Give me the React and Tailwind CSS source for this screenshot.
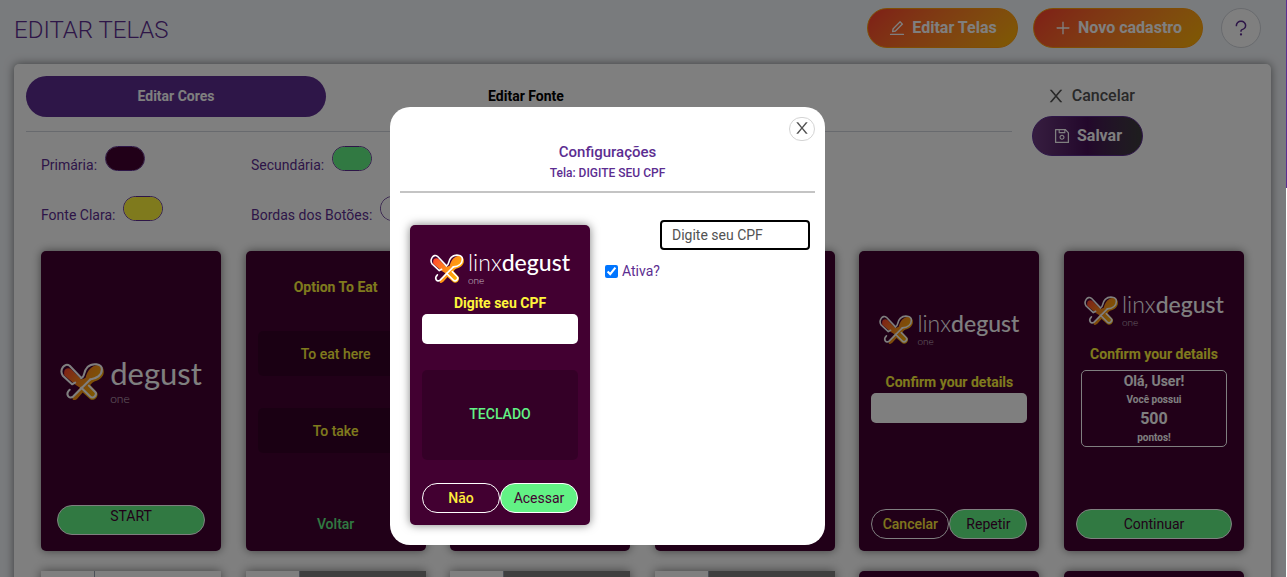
import { useId } from 'react';
import {
    AiOutlineEdit,
    AiOutlinePlus,
    AiOutlineQuestion,
    AiOutlineSave,
} from 'react-icons/ai';

const colors = [
    { id: 'primary', label: 'Primária:', value: '#420031' },
    { id: 'secondary', label: 'Secundária:', value: '#62f285' },
    { id: 'light-font', label: 'Fonte Clara:', value: '#fff53b' },
    { id: 'button-border', label: 'Bordas dos Botões:', value: '#ffffff' },
];

function CloseIcon({ className }) {
    return (
        <svg viewBox="0 0 1024 1024" fill="currentColor" className={className} aria-hidden="true">
            <path d="M563.8 512l262.5-312.9c4.4-5.2.7-13.1-6.1-13.1h-79.8c-4.7 0-9.2 2.1-12.3 5.7L511.6 449.8 295.1 191.7c-3-3.6-7.5-5.7-12.3-5.7H203c-6.8 0-10.5 7.9-6.1 13.1L459.4 512 196.9 824.9A7.95 7.95 0 0 0 203 838h79.8c4.7 0 9.2-2.1 12.3-5.7l216.5-258.1 216.5 258.1c3 3.6 7.5 5.7 12.3 5.7h79.8c6.8 0 10.5-7.9 6.1-13.1L563.8 512z" />
        </svg>
    );
}

function LogoIcon({ className }) {
    const id = useId();
    return (
        <svg viewBox="0 0 128 108" className={className} fill="none" aria-hidden="true">
            <defs>
                <linearGradient id={id} x1="0" y1="0" x2="1" y2="0.6">
                    <stop offset="0" stopColor="#ff3b30" />
                    <stop offset="0.5" stopColor="#ff8a1a" />
                    <stop offset="1" stopColor="#ffb800" />
                </linearGradient>
            </defs>
            <path
                d="M12 30C10 16 24 12 32 18L62 48L74 44C80 22 92 6 112 6C130 8 130 30 124 38C116 52 100 52 94 58L88 64L108 86C114 100 98 112 88 106L66 86L50 104C42 112 32 108 38 96L58 72L46 64L12 36Z"
                fill={`url(#${id})`}
            />
            <g stroke="#fff" strokeWidth="6" strokeLinecap="round" strokeLinejoin="round">
                <path d="M44 57L35 62L8 37C-3 20 13-3 28 8L62 44" />
                <path d="M62 44C74 40 66 26 80 12C94-1 122 1 122 19C122 36 106 46 88 48" />
                <path d="M88 48L38 98C26 107 14 91 28 78" />
                <path d="M62 72L88 98C97 106 110 92 102 84L84 66" />
            </g>
        </svg>
    );
}

function Logo({ short }) {
    if (short) {
        return (
            <div className="flex items-center justify-center gap-1.5 text-white">
                <LogoIcon className="h-[37px] w-11" />
                <div className="text-left font-['Lato','Liberation_Sans',sans-serif]">
                    <p className="text-[31px] leading-9">degust</p>
                    <p className="text-xs leading-4 font-light opacity-70">one</p>
                </div>
            </div>
        );
    }
    return (
        <div className="flex items-center justify-center gap-1 text-white">
            <LogoIcon className="h-[29px] w-[34px]" />
            <div className="text-left font-['Lato','Liberation_Sans',sans-serif]">
                <p className="text-[23px] leading-6">
                    <span className="font-light">linx</span>
                    <span className="font-medium">degust</span>
                </p>
                <p className="text-[10px] leading-3 font-light opacity-70">one</p>
            </div>
        </div>
    );
}

function ScreenCard({ children }) {
    return (
        <div className="flex h-[300px] w-[180px] shrink-0 flex-col rounded-[5px] bg-[#420031] px-3 pb-3 text-center text-sm leading-5 shadow-[0_0_10px_rgba(0,0,0,0.5)]">
            {children}
        </div>
    );
}

function CardTitle({ children }) {
    return <h3 className="font-bold text-[#fff53b]">{children}</h3>;
}

function TwoButtons({ left, right }) {
    return (
        <div className="mt-auto flex">
            <button className="h-[30px] flex-1 rounded-full border border-white font-medium text-[#ffeb3b]">
                {left}
            </button>
            <button className="h-[30px] flex-1 rounded-full border border-white bg-[#62f285] text-[#420031]">
                {right}
            </button>
        </div>
    );
}

function PreviewTop({ dark }) {
    return (
        <div className={dark ? 'flex h-[300px] w-[180px] bg-[#7f7f7f] shadow-[0_0_10px_rgba(0,0,0,0.5)]' : 'flex h-[300px] w-[180px] bg-white shadow-[0_0_10px_rgba(0,0,0,0.5)]'}>
            <div className="w-[54px] border-r border-gray-400 bg-white" />
        </div>
    );
}

function ConfigModal() {
    return (
        <div className="absolute inset-0 flex items-start justify-center bg-black/50 pt-[107px] pr-[71px]">
            <div role="dialog" aria-labelledby="modal-title" className="w-[435px] rounded-[20px] bg-white px-2.5 pt-2.5 pb-5">
                {/* Close */}
                <div className="flex h-6 justify-end">
                    <button aria-label="Fechar" className="flex h-6 w-[26px] justify-center rounded-full border border-neutral-300 pt-px text-neutral-600">
                        <CloseIcon className="size-[18px]" />
                    </button>
                </div>

                {/* Title */}
                <div className="border-b-2 border-[#c4c4c4] pb-[7px] text-center font-medium text-[#5c2d91]">
                    <h2 id="modal-title" className="text-[15px] leading-[22px]">Configurações</h2>
                    <p className="text-xs leading-[21px]">Tela: DIGITE SEU CPF</p>
                </div>

                {/* Content */}
                <div className="flex gap-[15px] px-2.5 pt-8">
                    <ScreenCard>
                        <div className="pt-[25px] pb-[7px]">
                            <Logo />
                        </div>
                        <CardTitle>Digite seu CPF</CardTitle>
                        <input aria-label="CPF" className="mt-px h-[30px] w-full rounded-[5px] bg-white px-2" />
                        <div className="mt-[26px] flex h-[90px] items-center justify-center rounded-[5px] bg-black/20 pb-0.5 font-medium text-[#62f285]">
                            TECLADO
                        </div>
                        <TwoButtons left="Não" right="Acessar" />
                    </ScreenCard>
                    <form className="-mt-[5px] -mr-[5px] flex-1 text-sm text-[#5c2d91]">
                        <div className="flex justify-end">
                            <input
                                autoFocus
                                aria-label="Texto"
                                defaultValue="Digite seu CPF"
                                className="h-[30px] w-[150px] rounded-[4px] border-2 border-black px-2.5 text-neutral-600 outline-none"
                            />
                        </div>
                        <label className="mt-[11px] flex items-center gap-1">
                            <input type="checkbox" defaultChecked className="size-[13px]" />
                            Ativa?
                        </label>
                    </form>
                </div>
            </div>
        </div>
    );
}

function App() {
    return (
        <div className="flex h-screen overflow-hidden bg-[#f3f6fa] font-['Roboto','Liberation_Sans',sans-serif]">
            <div className="relative flex-1 overflow-hidden">
                {/* Header */}
                <header className="flex h-16 items-start justify-between pt-2 pr-[25px] pl-3.5">
                    <h1 className="text-2xl leading-[44px] font-light text-[#5c2d91]">EDITAR TELAS</h1>
                    <div className="flex gap-[15px]">
                        <button className="flex h-10 w-[151px] items-center justify-center gap-1.5 rounded-full border border-[#ff9d0a] bg-linear-135 from-[#ff3d2e] to-[#ffb400] font-bold text-white">
                            <AiOutlineEdit className="size-[18px]" />
                            Editar Telas
                        </button>
                        <button className="flex h-10 w-[170px] items-center justify-center gap-1.5 rounded-full border border-[#ff9d0a] bg-linear-135 from-[#ff3d2e] to-[#ffb400] font-bold text-white">
                            <AiOutlinePlus className="size-[18px]" />
                            Novo cadastro
                        </button>
                        <button aria-label="Ajuda" className="ml-[3px] flex size-10 items-center justify-center rounded-full border border-gray-300 bg-white text-[#5c2d91]">
                            <AiOutlineQuestion className="size-5" />
                        </button>
                    </div>
                </header>

                {/* Main Content */}
                <main className="mr-[15px] ml-3.5 rounded-[5px] bg-white pt-3 shadow-[0_0_10px_rgba(0,0,0,0.5)]">
                    <div className="flex px-3">
                        <div className="flex-1">
                            {/* Tabs */}
                            <div className="flex gap-[50px] border-b border-gray-300 pb-3.5 text-sm font-bold">
                                <button className="h-[41px] w-[300px] rounded-full bg-[#5c2d91] pb-px text-white">Editar Cores</button>
                                <button className="h-[41px] w-[300px] pb-px">Editar Fonte</button>
                            </div>

                            {/* Colors */}
                            <div className="grid w-[450px] grid-cols-2 px-[15px] pt-3.5">
                                {colors.map((color) => (
                                    <div key={color.id} className="flex h-[50px] items-start gap-2">
                                        <label htmlFor={color.id} className="pt-[9px] text-sm leading-5 text-[#5c2d91]">
                                            {color.label}
                                        </label>
                                        <input
                                            type="color"
                                            id={color.id}
                                            defaultValue={color.value}
                                            className="h-[25px] w-10 shrink-0 overflow-hidden rounded-full border border-[#5c2d91] [&::-webkit-color-swatch]:border-0 [&::-webkit-color-swatch-wrapper]:p-0"
                                        />
                                    </div>
                                ))}
                            </div>
                        </div>

                        {/* Actions */}
                        <div className="mr-[116px] ml-5 w-[111px]">
                            <button className="flex h-10 w-full items-center justify-end gap-1.5 pr-2 font-medium text-neutral-600">
                                <CloseIcon className="size-5" />
                                Cancelar
                            </button>
                            <button className="flex h-10 w-full items-center justify-center gap-1.5 rounded-full border border-[#5c2d91] bg-linear-to-r from-[#6d3b80] via-[#460f57] to-[#3c3c3c] font-bold text-white">
                                <AiOutlineSave className="size-[18px]" />
                                Salvar
                            </button>
                        </div>
                    </div>

                    {/* Screens */}
                    <div className="grid grid-cols-[repeat(6,180px)] justify-between gap-y-5 px-[27px] pt-[5px] pb-5">
                        <ScreenCard>
                            <div className="pt-[104px]">
                                <Logo short />
                            </div>
                            <div className="mt-auto px-1 pb-1">
                                <button className="h-[30px] w-full rounded-full border border-white bg-[#62f285] pb-2 text-[#420031]">
                                    START
                                </button>
                            </div>
                        </ScreenCard>
                        <ScreenCard>
                            <div className="pt-[26px]">
                                <CardTitle>Option To Eat</CardTitle>
                            </div>
                            <button className="mt-[34px] h-[45px] rounded-[5px] bg-black/20 font-medium text-[#fff53b]">To eat here</button>
                            <button className="mt-8 h-[45px] rounded-[5px] bg-black/20 font-medium text-[#fff53b]">To take</button>
                            <button className="mt-auto h-[30px] font-medium text-[#62f285]">Voltar</button>
                        </ScreenCard>
                        <ScreenCard />
                        <ScreenCard />
                        <ScreenCard>
                            <div className="pt-[60px] pb-[25px]">
                                <Logo />
                            </div>
                            <CardTitle>Confirm your details</CardTitle>
                            <input aria-label="Confirm your details" className="mt-px h-[30px] rounded-[5px] bg-white px-2" />
                            <TwoButtons left="Cancelar" right="Repetir" />
                        </ScreenCard>
                        <ScreenCard>
                            <div className="pt-[41px] pb-4">
                                <Logo />
                            </div>
                            <CardTitle>Confirm your details</CardTitle>
                            <div className="mx-[5px] mt-1.5 rounded-[5px] border border-white font-bold text-white">
                                <p>Olá, User!</p>
                                <p className="text-[10px] leading-[17px]">Você possui</p>
                                <p className="text-base leading-[21px]">500</p>
                                <p className="text-[10px] leading-[17px]">pontos!</p>
                            </div>
                            <button className="mt-auto h-[30px] rounded-full border border-white bg-[#62f285] text-[#420031]">
                                Continuar
                            </button>
                        </ScreenCard>
                        <PreviewTop />
                        <PreviewTop dark />
                        <PreviewTop dark />
                        <PreviewTop dark />
                        <ScreenCard />
                        <ScreenCard />
                    </div>
                </main>

                <ConfigModal />
            </div>

            {/* Scroll track */}
            <div className="w-px bg-white">
                <div className="h-[188px] bg-[#5c2d91]" />
            </div>
        </div>
    );
}

export default App;
